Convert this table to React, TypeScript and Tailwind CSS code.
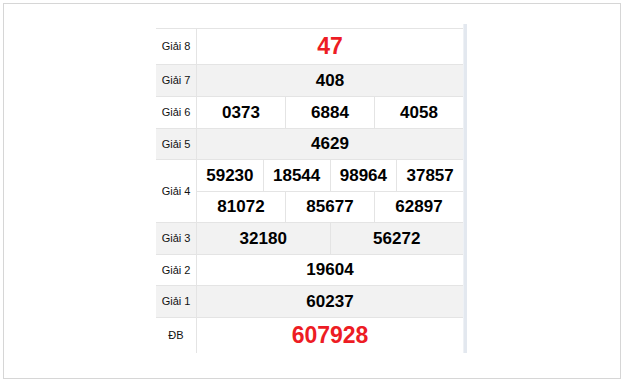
const red = 'text-[#ed1c24]';

function Label({ children, shaded }: { children: React.ReactNode; shaded?: boolean }) {
  return (
    <div
      className={`w-[41px] shrink-0 flex items-center justify-center border-r border-[#e4e4e4] text-[11px] text-[#111] ${
        shaded ? 'bg-[#f2f2f2]' : 'bg-white'
      }`}
    >
      {children}
    </div>
  );
}

function Cells({ nums, big, shaded }: { nums: string[]; big?: boolean; shaded?: boolean }) {
  return (
    <div className={`flex-1 flex ${shaded ? 'bg-[#f2f2f2]' : 'bg-white'}`}>
      {nums.map((n, i) => (
        <div
          key={n}
          className={`flex-1 flex items-center justify-center font-bold ${
            i > 0 ? 'border-l border-[#e4e4e4]' : ''
          } ${big ? `text-[23px] ${red}` : 'text-[17px] text-black'}`}
        >
          {n}
        </div>
      ))}
    </div>
  );
}

function Row({
  label,
  nums,
  h,
  big,
  shaded,
}: {
  label: string;
  nums: string[];
  h: string;
  big?: boolean;
  shaded?: boolean;
}) {
  return (
    <div className={`flex border-b border-[#e4e4e4] ${h}`}>
      <Label shaded={shaded}>{label}</Label>
      <Cells nums={nums} big={big} shaded={shaded} />
    </div>
  );
}

export default function App() {
  return (
    <div className="w-[622px] h-[379px] bg-white p-[3px] font-['Liberation_Sans',Arial,sans-serif]">
      <div className="w-[618px] h-[376px] border border-[#d6d6d6] pl-[152px] pt-[20px]">
        <div className="flex w-[311px] h-[329px]">
          {/* bảng kết quả */}
          <div className="w-[307px] pt-[4px]">
            <div className="border-t border-[#e4e4e4]">
              <Row label="Giải 8" nums={['47']} h="h-[36px]" big />
              <Row label="Giải 7" nums={['408']} h="h-[32px]" shaded />
              <Row label="Giải 6" nums={['0373', '6884', '4058']} h="h-[32px]" />
              <Row label="Giải 5" nums={['4629']} h="h-[31px]" shaded />
              <div className="flex border-b border-[#e4e4e4] h-[63px]">
                <Label>Giải 4</Label>
                <div className="flex-1 flex flex-col">
                  <div className="h-[32px] flex border-b border-[#e4e4e4]">
                    <Cells nums={['59230', '18544', '98964', '37857']} />
                  </div>
                  <div className="flex-1 flex">
                    <Cells nums={['81072', '85677', '62897']} />
                  </div>
                </div>
              </div>
              <Row label="Giải 3" nums={['32180', '56272']} h="h-[32px]" shaded />
              <Row label="Giải 2" nums={['19604']} h="h-[31px]" />
              <Row label="Giải 1" nums={['60237']} h="h-[32px]" shaded />
              <div className="flex h-[35px]">
                <Label>ĐB</Label>
                <Cells nums={['607928']} big />
              </div>
            </div>
          </div>
          {/* thanh cuộn */}
          <div className="w-[4px] bg-[#e3e8ef] border-l border-[#eef1f5]" />
        </div>
      </div>
    </div>
  );
}
